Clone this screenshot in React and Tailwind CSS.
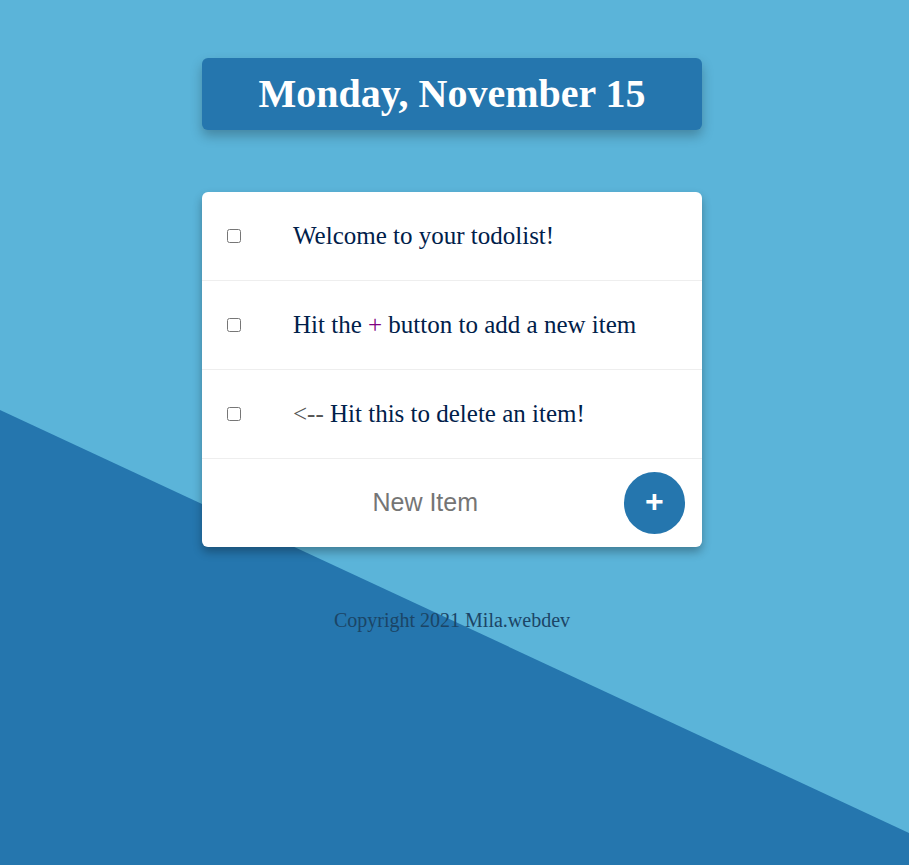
const items = [
  { id: 1, text: "Welcome to your todolist!" },
  { id: 2, text: "Hit the + button to add a new item" },
  { id: 3, text: "<-- Hit this to delete an item!" },
];

const App = () => {
  return (
    <div className="relative min-h-[865px] w-full overflow-hidden bg-[#5bb4d9] font-['Liberation_Serif',serif]">
      <div className="absolute inset-0 bg-[#2576ae] [clip-path:polygon(0_410px,100%_833px,100%_100%,0_100%)]" />

      <div className="relative flex flex-col items-center pr-[5px] pt-[58px]">
        <div className="flex h-[72px] w-[500px] items-center justify-center rounded-md bg-[#2576ae] shadow-[0_6px_12px_rgba(0,0,0,0.25)]">
          <h1 className="text-[40px] font-bold leading-none text-white">Monday, November 15</h1>
        </div>

        <div className="mt-[62px] w-[500px] overflow-hidden rounded-md bg-white shadow-[0_5px_10px_rgba(0,0,0,0.3)]">
          {items.map((item) => (
            <div key={item.id} className="flex h-[89px] items-center border-b border-[#eeeeee]">
              <input type="checkbox" className="ml-[25px] h-[14px] w-[14px]" />
              <p className="ml-[52px] text-[25px] text-[#00204a]">
                {item.id === 3 ? (
                  <>
                    <span className="text-[#555]">&lt;--</span> Hit this to delete an item!
                  </>
                ) : item.id === 2 ? (
                  <>
                    Hit the <span className="text-[#800080]">+</span> button to add a new item
                  </>
                ) : (
                  item.text
                )}
              </p>
            </div>
          ))}
          <form className="flex h-[88px] items-center" onSubmit={(e) => e.preventDefault()}>
            <input
              type="text"
              placeholder="New Item"
              className="ml-[25px] w-[400px] text-center font-['Liberation_Sans',sans-serif] text-[25px] text-[#333] outline-none placeholder:text-[#757575]"
            />
            <button
              type="submit"
              className="ml-auto mr-[17px] flex h-[62px] w-[62px] items-center justify-center rounded-full bg-[#2576ae] pb-[4px] font-['Liberation_Sans',sans-serif] text-[32px] font-bold text-white"
            >
              +
            </button>
          </form>
        </div>

        <footer className="mt-[58px] text-[20px] text-[#1b4566]">Copyright 2021 Mila.webdev</footer>
      </div>
    </div>
  );
};

export default App;
